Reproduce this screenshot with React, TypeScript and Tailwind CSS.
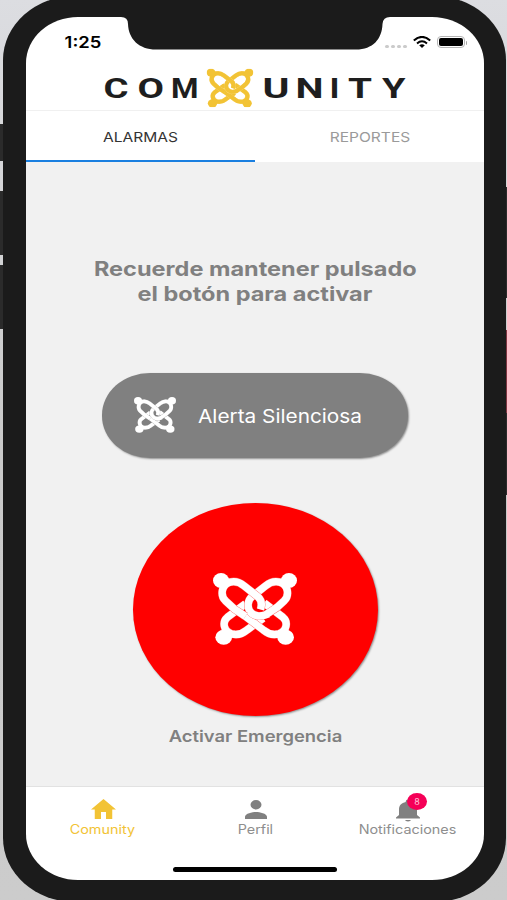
import { useState } from "react";
import type { ReactNode } from "react";
import clsx from "clsx";

type TabId = "alarmas" | "reportes";

const TABS: { id: TabId; label: string }[] = [
  { id: "alarmas", label: "ALARMAS" },
  { id: "reportes", label: "REPORTES" },
];

// x position and drawn width of every letter in the wordmark
const WORDMARK = [
  { letter: "C", x: 103.5, w: 25 },
  { letter: "O", x: 137.5, w: 26.5 },
  { letter: "M", x: 171, w: 27.5 },
  { letter: "U", x: 262.5, w: 27 },
  { letter: "N", x: 295.5, w: 28 },
  { letter: "I", x: 329.5, w: 10 },
  { letter: "T", x: 348, w: 24 },
  { letter: "Y", x: 382, w: 23.5 },
];

function Wide({ children, className }: { children: ReactNode; className?: string }) {
  return <span className={clsx("inline-block whitespace-nowrap", className ?? "scale-x-[1.15]")}>{children}</span>;
}

function KnotIcon({ className, gap }: { className?: string; gap: string }) {
  // Four interlocked links, one for each corner
  const links = [
    "M165 150 L116 185 C104 195 88 201 70 196 C46 188 42 160 58 147 L112 107",
    "M104 138 L166 185 C178 195 194 201 212 196 C236 188 240 160 224 147 L168 105",
    "M172 140 L206 118 L228 98 C244 82 240 50 214 43 C196 38 182 46 172 54 L130 87 C118 98 118 116 124 127 C134 144 156 148 180 137",
    "M112 144 L78 122 L52 98 C36 82 40 50 66 43 C84 38 98 46 108 54 L150 87 C161 97 162 108 157 124",
  ];
  return (
    <svg viewBox="15 16 251 213" preserveAspectRatio="none" className={className} fill="none" strokeLinejoin="round">
      {links.map((d) => (
        <g key={d}>
          <path d={d} stroke={gap} strokeWidth="24" />
          <path d={d} stroke="currentColor" strokeWidth="22" />
        </g>
      ))}
      <g fill="currentColor">
        <ellipse cx="39" cy="38" rx="24" ry="22" />
        <ellipse cx="242" cy="38" rx="24" ry="22" />
        <ellipse cx="47" cy="206" rx="25" ry="22" />
        <ellipse cx="232" cy="206" rx="25" ry="22" />
      </g>
    </svg>
  );
}

function StatusBar() {
  return (
    <div className="flex h-[50px] shrink-0 items-start justify-between pl-[41px] pr-[17px] pt-[15px] text-black">
      <Wide className="scale-x-[1.15] text-[16px] font-semibold leading-[21px]">1:25</Wide>
      <div className="flex h-[21px] items-center">
        <div className="mr-[6px] mt-[8px] flex gap-[2.5px]">
          {[0, 1, 2, 3].map((i) => (
            <span key={i} className="h-[3px] w-[3.5px] rounded-full bg-[#cbcbcb]" />
          ))}
        </div>
        <svg viewBox="0 0 18 12" preserveAspectRatio="none" className="-mt-px h-[12px] w-[18px]" fill="none" stroke="#000" strokeWidth="2">
          <path d="M0.8 4.4Q9-2.6 17.2 4.4" />
          <path d="M4 7.4Q9 3.2 14 7.4" />
          <path d="M6.2 9.2Q9 7.2 11.8 9.2L9 12Z" fill="#000" stroke="none" />
        </svg>
        <div className="-mt-px ml-[6px] h-[12px] w-[28px] rounded-[4px] border border-[#b5b5b5] p-[1px]">
          <div className="h-full rounded-[2px] bg-black" />
        </div>
        <span className="ml-px h-[4px] w-[1.5px] rounded-r-full bg-[#a5a5a5]" />
      </div>
    </div>
  );
}

function Notch() {
  return (
    <svg viewBox="100 15 310 35" className="absolute left-[74px] top-[-2px] h-[35px] w-[310px]">
      <path
        d="M100 15V17H121Q128 17 128 24C128.500 39 139 49.500 156 49.500H356C373 49.500 382 39 382.500 24Q383 17 390 17H410V15Z"
        fill="#1b1b1b"
      />
    </svg>
  );
}

function Header() {
  return (
    <div className="h-[44px] shrink-0 border-b border-[#f0f0f0]">
      <div className="-ml-[26px] -mt-px h-[42px] w-[507px]">
        <svg viewBox="0 66 507 42" className="h-[42px] w-[507px] font-[Roboto,sans-serif]" fill="#1e1e1e">
          {WORDMARK.map(({ letter, x, w }) => (
            <text key={letter} x={x} y="98" textLength={w} lengthAdjust="spacingAndGlyphs" fontSize="28" fontWeight="700">
              {letter}
            </text>
          ))}
          <svg x="206.500" y="68.500" width="47" height="39" className="text-[#f2c335]">
            <KnotIcon className="h-[39px] w-[47px]" gap="#f8d878" />
          </svg>
        </svg>
      </div>
    </div>
  );
}

export default function App() {
  const [tab, setTab] = useState<TabId>("alarmas");

  return (
    <div className="relative flex h-[900px] w-[507px] overflow-hidden bg-gradient-to-b from-[#dcdde1] via-[#c9c9c9] to-[#cccccc] font-[Inter,'Liberation_Sans',sans-serif]">
      {/* Side buttons */}
      <span className="absolute left-0 top-[124px] h-[37px] w-[4px] bg-[#2b2b2b]" />
      <span className="absolute left-0 top-[191px] h-[64px] w-[4px] bg-[#2b2b2b]" />
      <span className="absolute left-0 top-[265px] h-[64px] w-[4px] bg-[#2b2b2b]" />
      <span className="absolute left-[505px] top-[187px] h-[111px] w-[2px] bg-[#2b2b2b]" />
      <span className="absolute left-[505px] top-[330px] h-[83px] w-[2px] bg-[#7c3540]" />
      <span className="absolute left-[505px] top-[413px] h-[82px] w-[2px] bg-[#2b2b2b]" />

      <div className="relative -mt-1 ml-[3px] h-[906px] w-[503px] shrink-0 rounded-[72px/64px] bg-[#1b1b1b] pl-[23px] pt-[21px]">
        <div className="relative flex h-[863px] w-[458px] flex-col overflow-hidden rounded-[52px/46px] bg-white">
          <Notch />
          <StatusBar />
          <Header />

          {/* Tabs */}
          <div className="flex h-[51px] shrink-0">
            {TABS.map(({ id, label }) => (
              <button
                key={id}
                onClick={() => setTab(id)}
                className={clsx(
                  "w-1/2 border-b-2 pt-[4px] text-[13.5px]",
                  tab === id ? "border-[#1a7fe0] text-[#333]" : "border-transparent text-[#9a9a9a]"
                )}
              >
                <Wide>{label}</Wide>
              </button>
            ))}
          </div>

          {/* Alarm actions */}
          <main className="flex h-[624px] shrink-0 flex-col items-center bg-[#f1f1f1]">
            <h1 className="mt-[95px] text-center text-[20px] font-bold leading-[25px] text-[#808080]">
              <Wide className="scale-x-[1.175]">Recuerde mantener pulsado</Wide>
              <br />
              <Wide className="scale-x-[1.175]">el botón para activar</Wide>
            </h1>

            <button className="mt-[66px] flex h-[85px] w-[306px] items-center rounded-[48px/42px] bg-[#808080] pl-[32px] text-white shadow-[1px_1px_2px_rgba(0,0,0,0.4)]">
              <KnotIcon className="-mt-[2px] h-[36px] w-[42px]" gap="#a8a8a8" />
              <Wide className="ml-[22px] mt-[3px] origin-left scale-x-[1.113] text-[18.7px]">Alerta Silenciosa</Wide>
            </button>

            <button className="mt-[45px] flex h-[213px] w-[245px] shrink-0 items-center justify-center rounded-[50%] bg-[#ff0000] pb-[2px] text-white shadow-[1px_1px_2px_rgba(0,0,0,0.4)]">
              <KnotIcon className="h-[72px] w-[84px]" gap="#ff6060" />
            </button>
            <Wide className="mt-[8px] scale-x-[1.15] text-[16px] font-semibold leading-[24px] text-[#808080]">
              Activar Emergencia
            </Wide>
          </main>

          {/* Bottom navigation */}
          <nav className="grid h-[56px] shrink-0 grid-cols-3 border-t border-[#e2e2e2] text-[12.5px] leading-[16px] text-[#8e8e8e]">
            <div className="flex flex-col items-center pt-[12px] text-[#f2c335]">
              <svg viewBox="2 3 20 17" preserveAspectRatio="none" className="ml-[2px] h-[20px] w-[25px]" fill="currentColor">
                <path d="M10 20v-6h4v6h5v-8h3L12 3 2 12h3v8z" />
              </svg>
              <Wide className="mt-[3px] scale-x-[1.15]">Comunity</Wide>
            </div>
            <div className="flex flex-col items-center pt-[13px]">
              <svg viewBox="4 4 16 16" preserveAspectRatio="none" className="ml-[2px] h-[19px] w-[22px] text-[#808080]" fill="currentColor">
                <path d="M12 12a4 4 0 1 0 0-8 4 4 0 0 0 0 8zm0 2c-2.67 0-8 1.34-8 4v2h16v-2c0-2.66-5.33-4-8-4z" />
              </svg>
              <Wide className="mt-[3px] scale-x-[1.15]">Perfil</Wide>
            </div>
            <div className="flex flex-col items-center pt-[12px]">
              <div className="relative ml-px">
                <svg viewBox="4 2 16 20" preserveAspectRatio="none" className="block h-[23px] w-[24px] text-[#808080]" fill="currentColor">
                  <path d="M10 20.2h4q-.3 1.3-2 1.3t-2-1.3zM18 16v-5c0-3.07-1.64-5.64-4.5-6.32V4a1.5 1.5 0 0 0-3 0v.68C7.63 5.36 6 7.92 6 11v5l-2 2v1h16v-1l-2-2z" />
                </svg>
                <span className="absolute -top-[6px] left-[11px] flex h-[17px] w-[20px] items-center justify-center rounded-[50%] bg-[#f50057] text-[9px] text-[#ffc4d8]">
                  8
                </span>
              </div>
              <Wide className="scale-x-[1.15]">Notificaciones</Wide>
            </div>
          </nav>

          {/* Home indicator */}
          <div className="ml-[147px] mt-[25px] h-[5px] w-[164px] shrink-0 rounded-full bg-black" />
        </div>
      </div>
    </div>
  );
}
